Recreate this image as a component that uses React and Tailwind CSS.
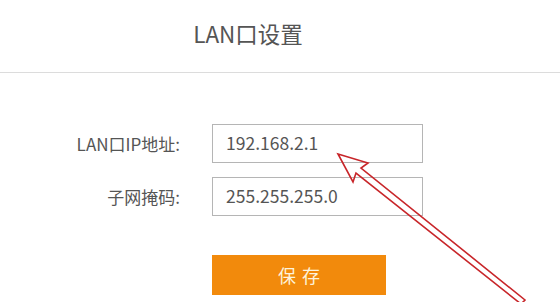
export default function App() {
  const font = { fontFamily: '"Noto Sans CJK SC", "Noto Sans", sans-serif' };
  return (
    <div className="relative w-[560px] h-[302px] bg-white overflow-hidden" style={font}>
      <div className="h-[73px] flex items-center justify-center pr-[64px] border-b border-[#dcdcdc]">
        <span className="text-[22.5px] text-[#555] mt-[-4px]">LAN口设置</span>
      </div>
      <div className="pt-[51px] flex flex-col">
        <div className="flex items-center h-[39px]">
          <div className="w-[182px] text-right text-[17px] text-[#555] pr-[2px]">LAN口IP地址:</div>
          <div className="ml-[30px] w-[211px] h-[39px] border border-[#b5b5b5] flex items-center pl-[13px] text-[17.5px] text-[#555]">
            192.168.2.1
          </div>
        </div>
        <div className="flex items-center h-[39px] mt-[14px]">
          <div className="w-[182px] text-right text-[17px] text-[#555] pr-[2px]">子网掩码:</div>
          <div className="ml-[30px] w-[211px] h-[39px] border border-[#b5b5b5] flex items-center pl-[13px] text-[17.5px] text-[#555]">
            255.255.255.0
          </div>
        </div>
        <div className="mt-[39px] ml-[212px] w-[174px] h-[40px] bg-[#f28a0c] flex items-center justify-center text-[18px] text-[#fdf3dc] tracking-[6px] pl-[6px]">
          保存
        </div>
      </div>
      <svg className="absolute left-0 top-0" width="560" height="302" viewBox="0 0 560 302">
        <polygon
          points="338,154 368,163 361,168 525,300 521,304 356,173 353,182"
          fill="none"
          stroke="#c8262a"
          strokeWidth="1.6"
          strokeLinejoin="miter"
        />
      </svg>
    </div>
  );
}
